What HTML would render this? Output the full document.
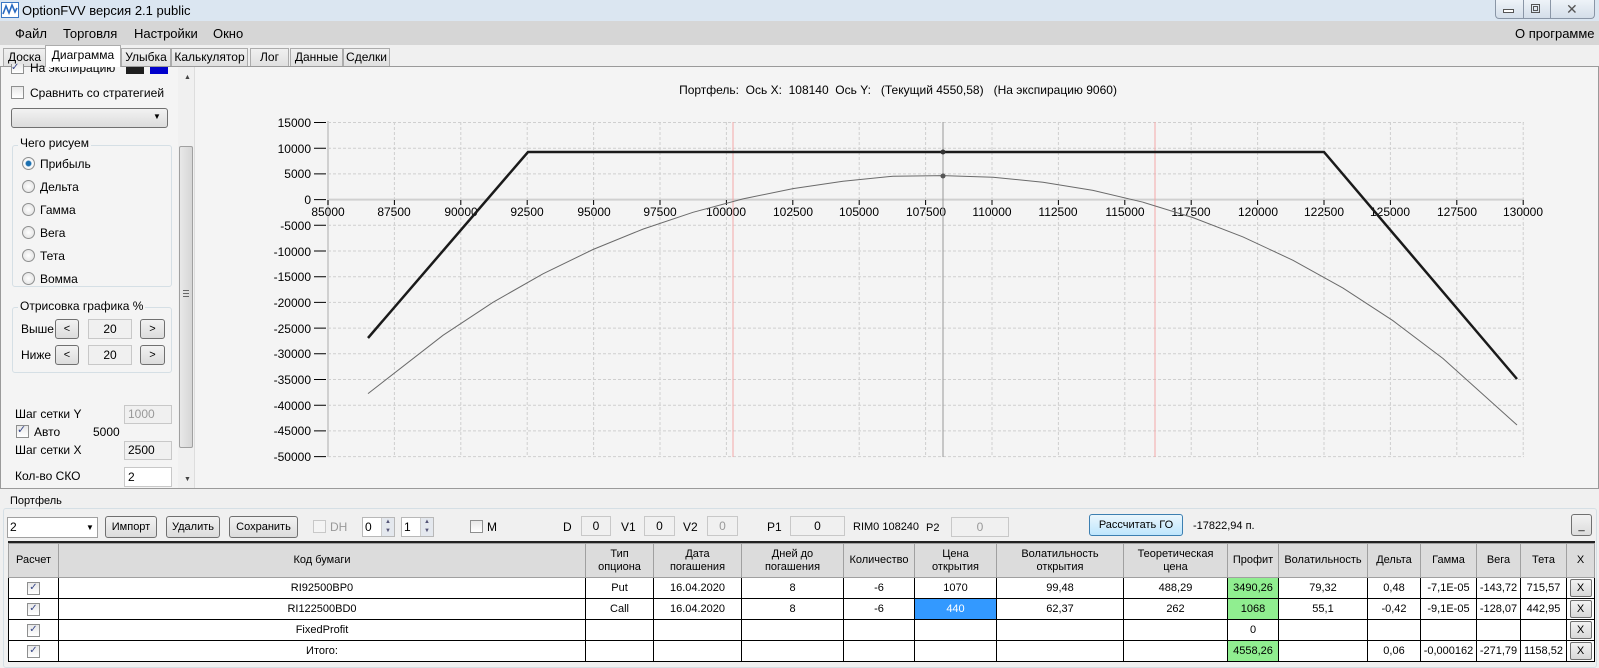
<!DOCTYPE html>
<html><head><meta charset="utf-8"><style>
*{box-sizing:border-box;margin:0;padding:0}
body{width:1599px;height:666px;overflow:hidden;background:#f0f0f0;font-family:"Liberation Sans",sans-serif;font-size:12px;color:#000;position:relative}
.a{position:absolute;white-space:nowrap}
.btn{position:absolute;border:1px solid #707070;border-radius:3px;background:linear-gradient(#f2f2f2,#dcdcdc);text-align:center;font-size:11px;line-height:18px}
.tb{position:absolute;border:1px solid #c8c8c8;background:#f0f0f0;text-align:center;font-size:12px}
.cb{position:absolute;width:13px;height:13px;border:1px solid #8e8f8f;background:linear-gradient(#e8e8e8,#fff)}
.rb{position:absolute;width:13px;height:13px;border:1px solid #8e8f8f;border-radius:50%;background:radial-gradient(#fff,#ddd)}
.tab{position:absolute;top:48px;height:19px;border:1px solid #acacac;background:linear-gradient(#f0f0f0,#e0e0e0);font-size:12px;text-align:center;line-height:17px}
table{border-collapse:collapse;position:absolute;left:8px;top:543px;font-size:11px;table-layout:fixed}
td{border:1px solid #000;text-align:center;height:21px;padding:0;overflow:hidden;white-space:nowrap;background:#fff}
tr.h td{background:#dcdcdc;border-color:#a0a0a0;height:34px;line-height:13px}
.g{background:#90ee90!important}
.x{display:inline-block;width:22px;height:18px;border:1px solid #707070;border-radius:2px;background:linear-gradient(#f2f2f2,#d8d8d8);line-height:16px}
</style></head><body>
<div class="a" style="left:0;top:0;width:1599px;height:21px;background:#dbe6f1"></div>
<svg class="a" style="left:1px;top:2px" width="18" height="16"><rect x="0.5" y="0.5" width="17" height="15" fill="#fff" stroke="#3a78c4"/><path d="M2 12 L5 4 L8 11 L11 3 L14 10 L16 6" stroke="#2a6bc0" stroke-width="1.6" fill="none"/></svg>
<div class="a" style="left:22px;top:3px;font-size:13px">OptionFVV версия 2.1 public</div>
<div class="a" style="left:1495px;top:0;width:100px;height:19px;border:1px solid #8a96a6;border-top:none;border-radius:0 0 4px 4px;background:linear-gradient(#eef3f8,#d4dee9)"></div>
<div class="a" style="left:1523px;top:0;width:1px;height:19px;background:#8a96a6"></div>
<div class="a" style="left:1550px;top:0;width:1px;height:19px;background:#8a96a6"></div>
<div class="a" style="left:1503px;top:9px;width:11px;height:4px;border:1px solid #555;background:#fff"></div>
<div class="a" style="left:1531px;top:4px;width:9px;height:9px;border:1px solid #555"></div>
<div class="a" style="left:1533px;top:6px;width:5px;height:5px;border:1px solid #555"></div>
<div class="a" style="left:1566px;top:1px;font-size:14px;color:#555">✕</div>
<div class="a" style="left:0;top:21px;width:1599px;height:24px;background:#d6d6d6"></div>
<div class="a" style="left:15px;top:26px;font-size:13px">Файл</div>
<div class="a" style="left:63px;top:26px;font-size:13px">Торговля</div>
<div class="a" style="left:134px;top:26px;font-size:13px">Настройки</div>
<div class="a" style="left:213px;top:26px;font-size:13px">Окно</div>
<div class="a" style="left:1515px;top:26px;font-size:13px">О программе</div>
<div class="tab" style="left:3px;width:43px">Доска</div>
<div class="tab" style="left:45px;top:45px;height:22px;width:76px;background:#fff;border-bottom:none;line-height:19px;z-index:2">Диаграмма</div>
<div class="tab" style="left:121px;width:50px">Улыбка</div>
<div class="tab" style="left:171px;width:77px">Калькулятор</div>
<div class="tab" style="left:250px;width:39px">Лог</div>
<div class="tab" style="left:290px;width:53px">Данные</div>
<div class="tab" style="left:343px;width:47px">Сделки</div>
<div class="a" style="left:0;top:66px;width:1599px;height:423px;border:1px solid #9a9a9a;background:#f4f4f4"></div>
<div class="cb" style="left:11px;top:64px;height:10px;border-top:none"></div>
<div class="a" style="left:11px;top:62px;font-size:10px;color:#3a4a8a">✓</div>
<div class="a" style="left:30px;top:63px;height:11px;overflow:hidden;line-height:10px">На экспирацию</div>
<div class="a" style="left:126px;top:67px;width:18px;height:7px;background:#1e1e1e"></div>
<div class="a" style="left:150px;top:67px;width:18px;height:7px;background:#0000cc"></div>
<div class="cb" style="left:11px;top:86px"></div>
<div class="a" style="left:30px;top:86px">Сравнить со стратегией</div>
<div class="a" style="left:11px;top:108px;width:157px;height:20px;border:1px solid #707070;border-radius:3px;background:linear-gradient(#f2f2f2,#dcdcdc)"></div>
<div class="a" style="left:153px;top:112px;font-size:8px">▼</div>
<div class="a" style="left:12px;top:145px;width:160px;height:142px;border:1px solid #d5dfe5;border-radius:3px"></div>
<div class="a" style="left:18px;top:136px;background:#f4f4f4;padding:0 2px">Чего рисуем</div>
<div class="rb" style="left:22px;top:157px;background:radial-gradient(#1a6fb0 30%,#fff 45%,#ddd)"></div>
<div class="a" style="left:40px;top:157px">Прибыль</div>
<div class="rb" style="left:22px;top:180px"></div><div class="a" style="left:40px;top:180px">Дельта</div>
<div class="rb" style="left:22px;top:203px"></div><div class="a" style="left:40px;top:203px">Гамма</div>
<div class="rb" style="left:22px;top:226px"></div><div class="a" style="left:40px;top:226px">Вега</div>
<div class="rb" style="left:22px;top:249px"></div><div class="a" style="left:40px;top:249px">Тета</div>
<div class="rb" style="left:22px;top:272px"></div><div class="a" style="left:40px;top:272px">Вомма</div>
<div class="a" style="left:12px;top:307px;width:160px;height:66px;border:1px solid #d5dfe5;border-radius:3px"></div>
<div class="a" style="left:18px;top:299px;background:#f4f4f4;padding:0 2px">Отрисовка графика %</div>
<div class="a" style="left:21px;top:322px">Выше</div>
<div class="btn" style="left:55px;top:319px;width:24px;height:20px">&lt;</div>
<div class="tb" style="left:88px;top:319px;width:44px;height:20px;line-height:18px">20</div>
<div class="btn" style="left:140px;top:319px;width:25px;height:20px">&gt;</div>
<div class="a" style="left:21px;top:348px">Ниже</div>
<div class="btn" style="left:55px;top:345px;width:24px;height:20px">&lt;</div>
<div class="tb" style="left:88px;top:345px;width:44px;height:20px;line-height:18px">20</div>
<div class="btn" style="left:140px;top:345px;width:25px;height:20px">&gt;</div>
<div class="a" style="left:15px;top:407px">Шаг сетки Y</div>
<div class="tb" style="left:124px;top:405px;width:48px;height:19px;color:#999;text-align:left;padding-left:3px;line-height:17px">1000</div>
<div class="cb" style="left:16px;top:425px"></div><div class="a" style="left:17px;top:423px;font-size:11px;color:#3a4a8a">✓</div>
<div class="a" style="left:34px;top:425px">Авто</div>
<div class="a" style="left:93px;top:425px">5000</div>
<div class="a" style="left:15px;top:443px">Шаг сетки X</div>
<div class="tb" style="left:124px;top:441px;width:48px;height:19px;text-align:left;padding-left:3px;line-height:17px">2500</div>
<div class="a" style="left:15px;top:469px">Кол-во СКО</div>
<div class="tb" style="left:124px;top:467px;width:48px;height:20px;background:#fff;text-align:left;padding-left:3px;line-height:18px">2</div>
<div class="a" style="left:178px;top:67px;width:16px;height:421px;background:#f0f0f0"></div>
<div class="a" style="left:184px;top:74px;font-size:7px;color:#444">▲</div>
<div class="a" style="left:179px;top:146px;width:14px;height:302px;border:1px solid #a0a0a0;border-radius:2px;background:linear-gradient(90deg,#e8e8e8,#d6d6d6)"></div>
<div class="a" style="left:183px;top:290px;width:6px;height:7px;border-top:1px solid #666;border-bottom:1px solid #666"></div>
<div class="a" style="left:183px;top:293px;width:6px;height:1px;background:#666"></div>
<div class="a" style="left:184px;top:476px;font-size:7px;color:#444">▼</div>
<div class="a" style="left:194px;top:67px;width:1px;height:421px;background:#ddd"></div>
<div class="a" style="left:898px;top:83px;transform:translateX(-50%)">Портфель:&nbsp; Ось X:&nbsp; 108140&nbsp; Ось Y:&nbsp;&nbsp; (Текущий 4550,58)&nbsp;&nbsp; (На экспирацию 9060)</div>
<svg class="a" style="left:0;top:0" width="1599" height="500" font-family="Liberation Sans" font-size="12">
<g stroke="#cfcfcf" stroke-dasharray="3,2" stroke-width="1">
<path d="M328 122.5H1524M328 148.2H1524M328 173.9H1524M328 225.3H1524M328 251H1524M328 276.7H1524M328 302.4H1524M328 328.1H1524M328 353.8H1524M328 379.5H1524M328 405.2H1524M328 430.9H1524M328 456.6H1524"/>
<path d="M394.4 122V457M460.8 122V457M527.2 122V457M593.6 122V457M660 122V457M726.4 122V457M792.8 122V457M859.2 122V457M925.6 122V457M992 122V457M1058.4 122V457M1124.8 122V457M1191.2 122V457M1257.6 122V457M1324 122V457M1390.4 122V457M1456.8 122V457M1523.2 122V457"/>
</g>
<line x1="328" y1="121" x2="328" y2="457" stroke="#d0d0d0" stroke-width="2"/>
<line x1="328" y1="199.6" x2="1524" y2="199.6" stroke="#d0d0d0" stroke-width="2"/>
<g stroke="#000"><path d="M314 122.5H326M314 148.2H326M314 173.9H326M314 199.6H326M314 225.3H326M314 251H326M314 276.7H326M314 302.4H326M314 328.1H326M314 353.8H326M314 379.5H326M314 405.2H326M314 430.9H326M314 456.6H326"/>
<path d="M328 200V205M394.4 200V205M460.8 200V205M527.2 200V205M593.6 200V205M660 200V205M726.4 200V205M792.8 200V205M859.2 200V205M925.6 200V205M992 200V205M1058.4 200V205M1124.8 200V205M1191.2 200V205M1257.6 200V205M1324 200V205M1390.4 200V205M1456.8 200V205M1523.2 200V205"/></g>
<g text-anchor="end">
<text x="311" y="127">15000</text><text x="311" y="153">10000</text><text x="311" y="178">5000</text><text x="311" y="204">0</text><text x="311" y="230">-5000</text><text x="311" y="256">-10000</text><text x="311" y="281">-15000</text><text x="311" y="307">-20000</text><text x="311" y="333">-25000</text><text x="311" y="358">-30000</text><text x="311" y="384">-35000</text><text x="311" y="410">-40000</text><text x="311" y="435">-45000</text><text x="311" y="461">-50000</text></g>
<g text-anchor="middle">
<text x="328" y="216">85000</text><text x="394" y="216">87500</text><text x="461" y="216">90000</text><text x="527" y="216">92500</text><text x="594" y="216">95000</text><text x="660" y="216">97500</text><text x="726" y="216">100000</text><text x="793" y="216">102500</text><text x="859" y="216">105000</text><text x="926" y="216">107500</text><text x="992" y="216">110000</text><text x="1058" y="216">112500</text><text x="1125" y="216">115000</text><text x="1191" y="216">117500</text><text x="1258" y="216">120000</text><text x="1324" y="216">122500</text><text x="1390" y="216">125000</text><text x="1457" y="216">127500</text><text x="1523" y="216">130000</text></g>
<line x1="733" y1="122" x2="733" y2="457" stroke="#f4a8a8"/>
<line x1="1155" y1="122" x2="1155" y2="457" stroke="#f4a8a8"/>
<line x1="943" y1="122" x2="943" y2="457" stroke="#999"/>
<polyline fill="none" stroke="#6a6a6a" stroke-width="1" points="368,393.6 443,335.3 493,302.3 543,273.8 593,249.5 643,229.1 693,212.3 743,198.9 793,188.6 843,181.3 893,176.2 943,175.6 993,177.2 1043,182.2 1093,190.4 1143,202.2 1193,217.6 1243,236.9 1293,260.3 1343,288.1 1393,320.7 1443,358.5 1517,425"/>
<polyline fill="none" stroke="#1a1a1a" stroke-width="2.5" points="368,338 528,152 1324,152 1517,379"/>
<circle cx="943" cy="152" r="2.5" fill="#333"/><circle cx="943" cy="176" r="2.5" fill="#555"/>
</svg>
<div class="a" style="left:3px;top:508px;width:1594px;height:160px;border:1px solid #d5dfe5;border-radius:3px"></div>
<div class="a" style="left:8px;top:495px;background:#f0f0f0;padding:0 2px;font-size:11px">Портфель</div>
<div class="a" style="left:7px;top:517px;width:91px;height:21px;border:1px solid #a0a0a0;background:#fff;padding-left:2px;line-height:19px">2</div>
<div class="a" style="left:86px;top:523px;font-size:8px">▼</div>
<div class="btn" style="left:105px;top:516px;width:52px;height:22px;line-height:20px">Импорт</div>
<div class="btn" style="left:166px;top:516px;width:54px;height:22px;line-height:20px">Удалить</div>
<div class="btn" style="left:229px;top:516px;width:69px;height:22px;line-height:20px">Сохранить</div>
<div class="cb" style="left:313px;top:520px;border-color:#c8c8c8;background:#f4f4f4"></div>
<div class="a" style="left:330px;top:520px;color:#999">DH</div>
<div class="a" style="left:362px;top:517px;width:33px;height:20px;border:1px solid #b8b8b8;background:#fff;padding-left:2px;line-height:18px">0</div>
<div class="a" style="left:381px;top:518px;width:13px;height:18px;background:#e4e8ee;border-left:1px solid #ccc;font-size:6px;line-height:9px;text-align:center;color:#557">▲<br>▼</div>
<div class="a" style="left:401px;top:517px;width:33px;height:20px;border:1px solid #b8b8b8;background:#fff;padding-left:2px;line-height:18px">1</div>
<div class="a" style="left:420px;top:518px;width:13px;height:18px;background:#e4e8ee;border-left:1px solid #ccc;font-size:6px;line-height:9px;text-align:center;color:#557">▲<br>▼</div>
<div class="cb" style="left:470px;top:520px"></div>
<div class="a" style="left:487px;top:520px">M</div>
<div class="a" style="left:563px;top:520px">D</div>
<div class="tb" style="left:581px;top:516px;width:30px;height:20px;line-height:18px">0</div>
<div class="a" style="left:621px;top:520px">V1</div>
<div class="tb" style="left:644px;top:516px;width:31px;height:20px;line-height:18px">0</div>
<div class="a" style="left:683px;top:520px">V2</div>
<div class="tb" style="left:707px;top:516px;width:31px;height:20px;line-height:18px;color:#999">0</div>
<div class="a" style="left:767px;top:520px">P1</div>
<div class="tb" style="left:790px;top:516px;width:55px;height:20px;line-height:18px">0</div>
<div class="a" style="left:853px;top:521px;font-size:11px">RIM0 108240</div>
<div class="a" style="left:926px;top:522px;font-size:11px">P2</div>
<div class="tb" style="left:951px;top:517px;width:58px;height:20px;line-height:18px;color:#999">0</div>
<div class="btn" style="left:1089px;top:514px;width:94px;height:22px;line-height:20px;border-color:#3c7fb1;background:linear-gradient(#eaf6fd,#bee6fd)">Рассчитать ГО</div>
<div class="a" style="left:1193px;top:520px;font-size:11px">-17822,94 п.</div>
<div class="btn" style="left:1571px;top:514px;width:21px;height:22px;line-height:22px">_</div>
<div class="a" style="left:8px;top:541px;width:1587px;height:2px;background:#222"></div>
<table>
<colgroup><col style="width:50px"><col style="width:527px"><col style="width:68px"><col style="width:88px"><col style="width:102px"><col style="width:71px"><col style="width:82px"><col style="width:127px"><col style="width:104px"><col style="width:51px"><col style="width:89px"><col style="width:53px"><col style="width:56px"><col style="width:44px"><col style="width:46px"><col style="width:28px"></colgroup>
<tr class="h"><td>Расчет</td><td>Код бумаги</td><td>Тип<br>опциона</td><td>Дата<br>погашения</td><td>Дней до<br>погашения</td><td>Количество</td><td>Цена<br>открытия</td><td>Волатильность<br>открытия</td><td>Теоретическая<br>цена</td><td>Профит</td><td>Волатильность</td><td>Дельта</td><td>Гамма</td><td>Вега</td><td>Тета</td><td>X</td></tr>
<tr><td><span class="cb" style="position:relative;display:inline-block;vertical-align:middle;font-size:10px;line-height:10px;color:#3a4a8a">✓</span></td><td>RI92500BP0</td><td>Put</td><td>16.04.2020</td><td>8</td><td>-6</td><td>1070</td><td>99,48</td><td>488,29</td><td class="g">3490,26</td><td>79,32</td><td>0,48</td><td>-7,1E-05</td><td>-143,72</td><td>715,57</td><td><span class="x">X</span></td></tr>
<tr><td><span class="cb" style="position:relative;display:inline-block;vertical-align:middle;font-size:10px;line-height:10px;color:#3a4a8a">✓</span></td><td>RI122500BD0</td><td>Call</td><td>16.04.2020</td><td>8</td><td>-6</td><td style="background:#3399ff;color:#fff">440</td><td>62,37</td><td>262</td><td class="g">1068</td><td>55,1</td><td>-0,42</td><td>-9,1E-05</td><td>-128,07</td><td>442,95</td><td><span class="x">X</span></td></tr>
<tr><td><span class="cb" style="position:relative;display:inline-block;vertical-align:middle;font-size:10px;line-height:10px;color:#3a4a8a">✓</span></td><td>FixedProfit</td><td></td><td></td><td></td><td></td><td></td><td></td><td></td><td>0</td><td></td><td></td><td></td><td></td><td></td><td><span class="x">X</span></td></tr>
<tr><td><span class="cb" style="position:relative;display:inline-block;vertical-align:middle;font-size:10px;line-height:10px;color:#3a4a8a">✓</span></td><td>Итого:</td><td></td><td></td><td></td><td></td><td></td><td></td><td></td><td class="g">4558,26</td><td></td><td>0,06</td><td>-0,000162</td><td>-271,79</td><td>1158,52</td><td><span class="x">X</span></td></tr>
</table>
</body></html>
